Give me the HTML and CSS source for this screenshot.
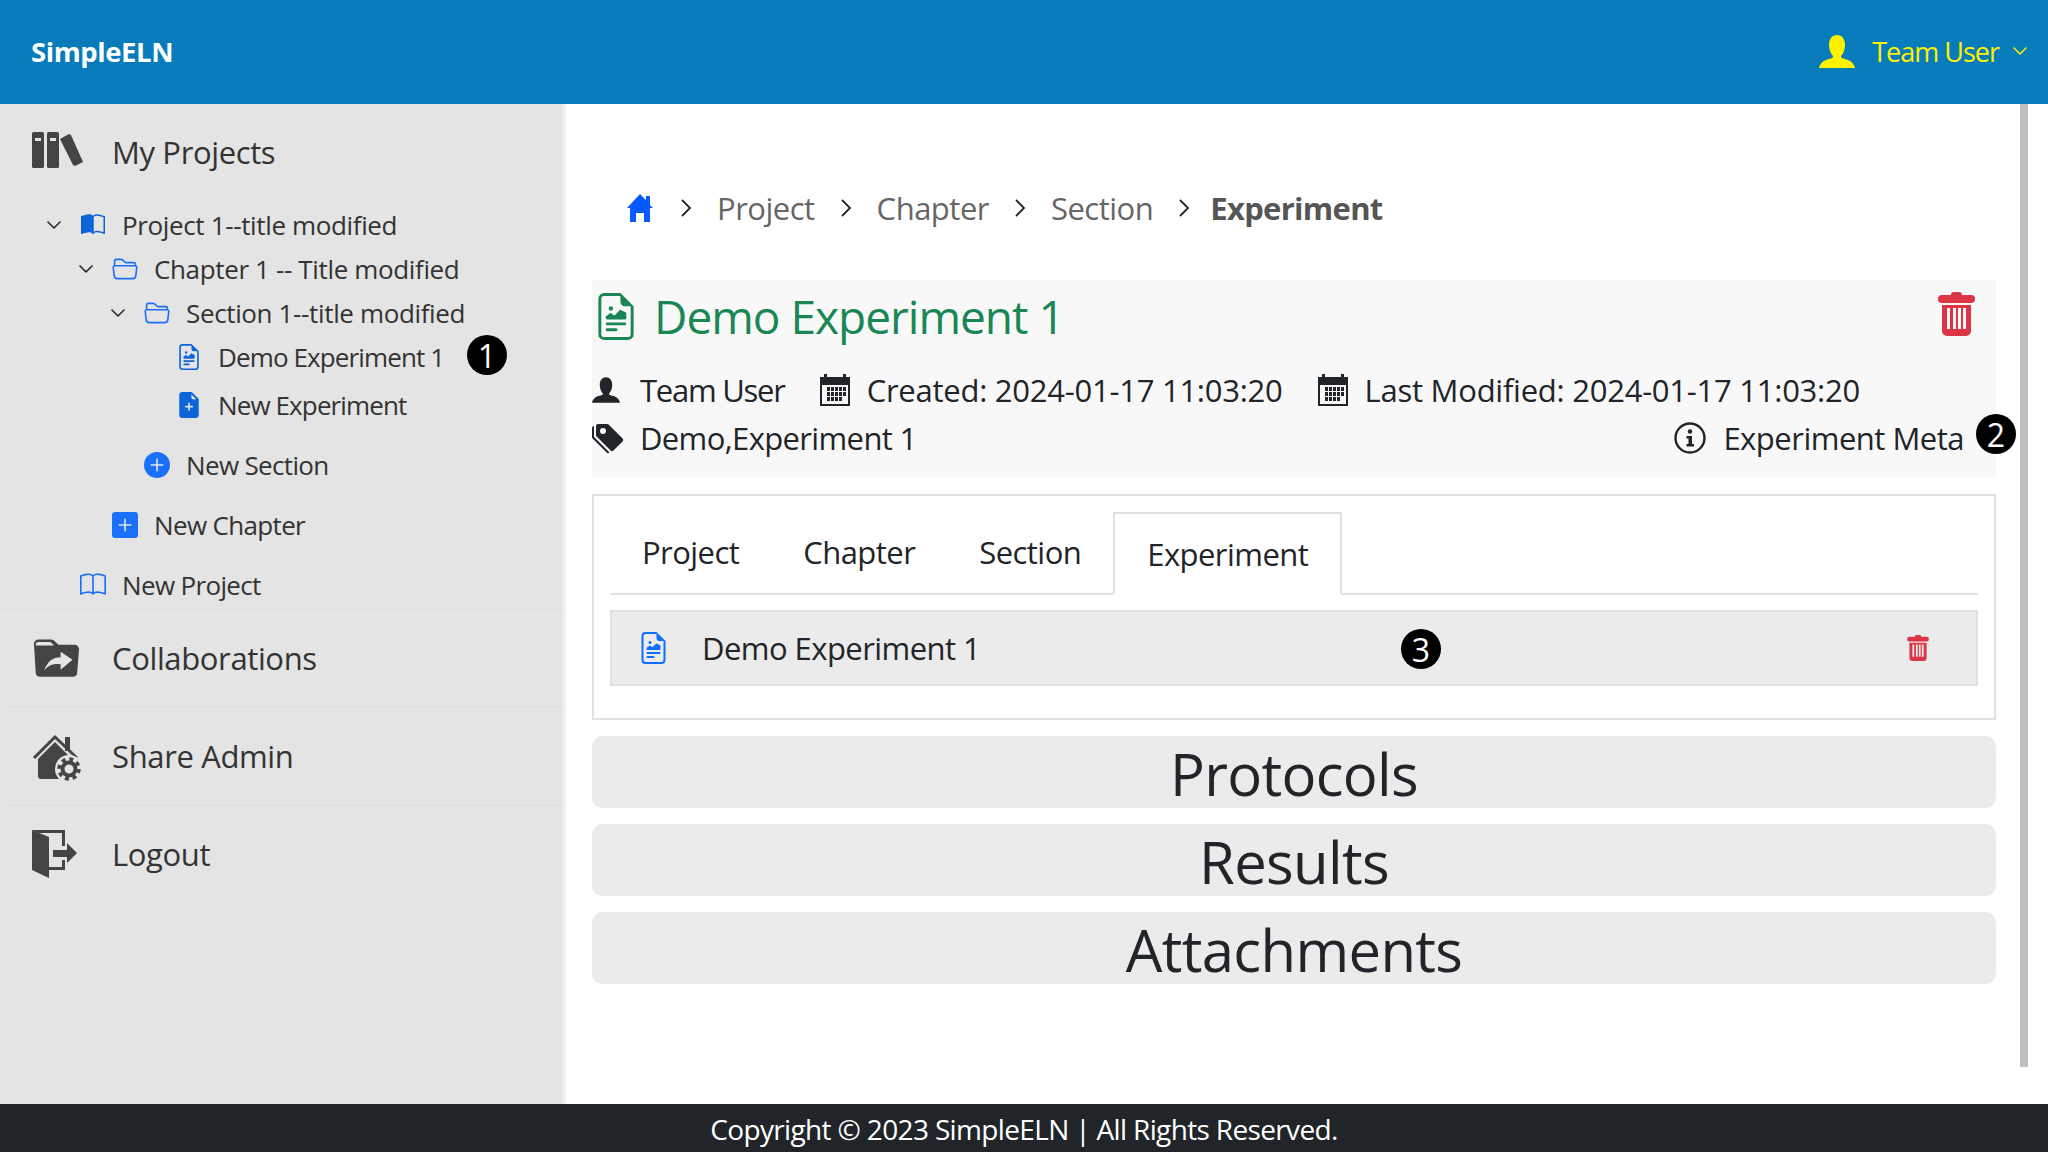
FILE: index.html
```html
<!DOCTYPE html>
<html lang="en">
<head>
<meta charset="utf-8">
<title>SimpleELN</title>
<link rel="stylesheet" href="styles.css">
</head>
<body>
<svg class="defs" aria-hidden="true">
  <symbol id="chev" viewBox="0 0 16 16"><path d="M1.646 4.646a.5.5 0 0 1 .708 0L8 10.293l5.646-5.647a.5.5 0 0 1 .708.708l-6 6a.5.5 0 0 1-.708 0l-6-6a.5.5 0 0 1 0-.708z" stroke="currentColor" stroke-width=".7"/></symbol>
  <symbol id="sep" viewBox="0 0 12 20"><path d="M2 2l8 8-8 8" fill="none" stroke="currentColor" stroke-width="1.8"/></symbol>
  <symbol id="richtext" viewBox="2 0 12 16"><path d="M14 4.5V14a2 2 0 0 1-2 2H4a2 2 0 0 1-2-2V2a2 2 0 0 1 2-2h5.5L14 4.5zm-3 0A1.5 1.5 0 0 1 9.5 3V1H4a1 1 0 0 0-1 1v12a1 1 0 0 0 1 1h8a1 1 0 0 0 1-1V4.5h-2z"/><path d="M4.5 12.5A.5.5 0 0 1 5 12h3a.5.5 0 0 1 0 1H5a.5.5 0 0 1-.5-.5zm0-2A.5.5 0 0 1 5 10h6a.5.5 0 0 1 0 1H5a.5.5 0 0 1-.5-.5zm1.639-3.708 1.33.886 1.854-1.855a.25.25 0 0 1 .289-.047l1.888.974V8.5a.5.5 0 0 1-.5.5H5a.5.5 0 0 1-.5-.5V8s1.54-1.274 1.639-1.208zM6.25 6a.75.75 0 1 0 0-1.5.75.75 0 0 0 0 1.5z"/></symbol>
  <symbol id="trash" viewBox="0 0 37 44"><path fill-rule="evenodd" d="M13 3a3 3 0 0 1 3-3h5a3 3 0 0 1 3 3h9a4 4 0 0 1 0 8H4a4 4 0 0 1 0-8zM4 13h29v26a5 5 0 0 1-5 5H9a5 5 0 0 1-5-5zM9 16v21h3V16zM15 16v21h3V16zM20 16v21h3V16zM25 16v21h3V16z"/></symbol>
  <symbol id="cal" viewBox="0 0 30 32"><path fill-rule="evenodd" d="M0 3h4V0h3v3h16V0h3v3h4v29H0zM2 11v19h26V11z"/><path d="M7 13h3v4H7zM11 13h3v4h-3zM15 13h3v4h-3zM19 13h3v4h-3zM23 13h3v4h-3zM7 18h3v4H7zM11 18h3v4h-3zM15 18h3v4h-3zM19 18h3v4h-3zM23 18h3v4h-3zM7 23h3v4H7zM11 23h3v4h-3zM15 23h3v4h-3zM19 23h3v4h-3z"/></symbol>
  <symbol id="person" viewBox="0 0 36 33"><path d="M18 0c5 0 8 4 8 10 0 5-2 9-4 11 0 2 1 2 4 3 5 1 9 4 10 9H0c1-5 5-8 10-9 3-1 4-1 4-3-2-2-4-6-4-11C10 4 13 0 18 0z"/></symbol>
</svg>

<header class="topbar">
  <a class="brand">SimpleELN</a>
  <div class="user">
    <svg class="user-icon"><use href="#person"/></svg>
    <span class="user-name">Team User</span>
    <svg class="user-caret"><use href="#chev"/></svg>
  </div>
</header>

<div class="body">
  <aside class="sidebar">
    <section class="nav-item nav-projects">
      <div class="nav-head">
        <svg class="nav-icon" viewBox="0 0 53 48"><path fill-rule="evenodd" transform="translate(1 4)" d="M1.500 0h9a1.500 1.500 0 0 1 1.500 1.500v33a1.500 1.500 0 0 1-1.500 1.500h-9A1.500 1.500 0 0 1 0 34.500v-33A1.500 1.500 0 0 1 1.500 0zm1.500 6v3h6V6zM16.500 0h9a1.500 1.500 0 0 1 1.500 1.500v33a1.500 1.500 0 0 1-1.500 1.500h-9a1.500 1.500 0 0 1-1.500-1.500v-33A1.500 1.500 0 0 1 16.500 0zm1.500 6v3h6V6z"/><path transform="translate(1 4)" d="M28 7l9-5 2 1 12 27-8 4-2-1z"/></svg>
        <span>My Projects</span>
      </div>
      <ul class="tree">
        <li>
          <div class="row row-title"><svg class="caret"><use href="#chev"/></svg>
            <svg class="t-icon t-dark" viewBox="0 0 16 16"><path d="M8.500 2.687c.654-.689 1.782-.886 3.112-.752 1.234.124 2.503.523 3.388.893v9.923c-.918-.35-2.107-.692-3.287-.81-1.094-.111-2.278-.039-3.213.492V2.687zM8 1.783C7.015.936 5.587.81 4.287.94c-1.514.153-3.042.672-3.994 1.105A.5.5 0 0 0 0 2.500v11a.5.5 0 0 0 .707.455c.882-.4 2.303-.881 3.680-1.020 1.409-.142 2.590.087 3.223.877a.5.5 0 0 0 .780 0c.633-.79 1.814-1.019 3.222-.877 1.378.139 2.800.620 3.681 1.020A.5.5 0 0 0 16 13.500v-11a.5.5 0 0 0-.293-.455c-.952-.433-2.480-.952-3.994-1.105C10.413.809 8.985.936 8 1.783z"/></svg>
            <span>Project 1--title modified</span></div>
          <ul class="tree sub">
            <li>
              <div class="row row-title"><svg class="caret"><use href="#chev"/></svg>
                <svg class="t-icon" viewBox="0 1 16 15"><path d="M1 3.500A1.500 1.500 0 0 1 2.500 2h2.764c.958 0 1.760.56 2.311 1.184C7.985 3.648 8.480 4 9 4h4.500A1.500 1.500 0 0 1 15 5.500v.64c.57.265.94.876.856 1.546l-.64 5.124A2.500 2.500 0 0 1 12.733 15H3.266a2.500 2.500 0 0 1-2.481-2.190l-.64-5.124A1.500 1.500 0 0 1 1 6.140V3.500zM2 6h12v-.5a.5.5 0 0 0-.5-.5H9c-.964 0-1.710-.629-2.174-1.154C6.374 3.334 5.820 3 5.264 3H2.500a.5.5 0 0 0-.5.500V6zm-.367 1a.5.5 0 0 0-.496.562l.64 5.124A1.500 1.500 0 0 0 3.266 14h9.468a1.500 1.500 0 0 0 1.489-1.314l.64-5.124A.5.5 0 0 0 14.367 7H1.633z"/></svg>
                <span>Chapter 1 -- Title modified</span></div>
              <ul class="tree sub">
                <li>
                  <div class="row row-title"><svg class="caret"><use href="#chev"/></svg>
                    <svg class="t-icon" viewBox="0 1 16 15"><path d="M1 3.500A1.500 1.500 0 0 1 2.500 2h2.764c.958 0 1.760.56 2.311 1.184C7.985 3.648 8.480 4 9 4h4.500A1.500 1.500 0 0 1 15 5.500v.64c.57.265.94.876.856 1.546l-.64 5.124A2.500 2.500 0 0 1 12.733 15H3.266a2.500 2.500 0 0 1-2.481-2.190l-.64-5.124A1.500 1.500 0 0 1 1 6.140V3.500zM2 6h12v-.5a.5.5 0 0 0-.5-.5H9c-.964 0-1.710-.629-2.174-1.154C6.374 3.334 5.820 3 5.264 3H2.500a.5.5 0 0 0-.5.500V6zm-.367 1a.5.5 0 0 0-.496.562l.64 5.124A1.500 1.500 0 0 0 3.266 14h9.468a1.500 1.500 0 0 0 1.489-1.314l.64-5.124A.5.5 0 0 0 14.367 7H1.633z"/></svg>
                    <span>Section 1--title modified</span></div>
                  <ul class="tree sub">
                    <li class="row leaf"><svg class="f-icon t-dark"><use href="#richtext"/></svg><span>Demo Experiment 1</span><span class="badge badge-tree">1</span></li>
                    <li class="row leaf leaf-new"><svg class="f-icon t-dark" viewBox="2 0 12 16"><path d="M9.293 0H4a2 2 0 0 0-2 2v12a2 2 0 0 0 2 2h8a2 2 0 0 0 2-2V4.707A1 1 0 0 0 13.707 4L10 .293A1 1 0 0 0 9.293 0zM9.500 3.500v-2l3 3h-2a1 1 0 0 1-1-1zM8.500 7v1.500H10a.5.5 0 0 1 0 1H8.500V11a.5.5 0 0 1-1 0V9.500H6a.5.5 0 0 1 0-1h1.500V7a.5.5 0 0 1 1 0z"/></svg><span>New Experiment</span></li>
                  </ul>
                </li>
                <li class="row add"><svg class="t-icon" viewBox="0 0 16 16"><path d="M16 8A8 8 0 1 1 0 8a8 8 0 0 1 16 0zM8.500 4.500a.5.5 0 0 0-1 0v3h-3a.5.5 0 0 0 0 1h3v3a.5.5 0 0 0 1 0v-3h3a.5.5 0 0 0 0-1h-3v-3z"/></svg><span>New Section</span></li>
              </ul>
            </li>
            <li class="row add"><svg class="t-icon" viewBox="0 0 16 16"><path d="M2 0a2 2 0 0 0-2 2v12a2 2 0 0 0 2 2h12a2 2 0 0 0 2-2V2a2 2 0 0 0-2-2H2zm6.500 4.500v3h3a.5.5 0 0 1 0 1h-3v3a.5.5 0 0 1-1 0v-3h-3a.5.5 0 0 1 0-1h3v-3a.5.5 0 0 1 1 0z"/></svg><span>New Chapter</span></li>
          </ul>
        </li>
        <li class="row add"><svg class="t-icon" viewBox="0 0 16 16"><path d="M1 2.828c.885-.37 2.154-.769 3.388-.893 1.330-.134 2.458.063 3.112.752v9.746c-.935-.53-2.120-.603-3.213-.493-1.180.12-2.370.461-3.287.811V2.828zm7.500-.141c.654-.689 1.782-.886 3.112-.752 1.234.124 2.503.523 3.388.893v9.923c-.918-.35-2.107-.692-3.287-.81-1.094-.111-2.278-.039-3.213.492V2.687zM8 1.783C7.015.936 5.587.81 4.287.94c-1.514.153-3.042.672-3.994 1.105A.5.5 0 0 0 0 2.500v11a.5.5 0 0 0 .707.455c.882-.4 2.303-.881 3.680-1.020 1.409-.142 2.590.087 3.223.877a.5.5 0 0 0 .780 0c.633-.79 1.814-1.019 3.222-.877 1.378.139 2.800.620 3.681 1.020A.5.5 0 0 0 16 13.500v-11a.5.5 0 0 0-.293-.455c-.952-.433-2.480-.952-3.994-1.105C10.413.809 8.985.936 8 1.783z"/></svg><span>New Project</span></li>
      </ul>
    </section>
    <section class="nav-item">
      <div class="nav-head">
        <svg class="nav-icon" viewBox="0 0 53 48"><path transform="translate(2 4.500) scale(.92 .89)" fill-rule="evenodd" d="M1 6a5 5 0 0 1 5-5h14c3 0 5 4 8 6h17a5 5 0 0 1 5 5l-2 27a5 5 0 0 1-5 4H8a5 5 0 0 1-5-4zM3 7v1h20l-4-4H6a3 3 0 0 0-3 3zM30 15v6c-8 0-14 4-18 15 5-6 10-8 18-7v6l13-11z"/></svg>
        <span>Collaborations</span>
      </div>
    </section>
    <section class="nav-item">
      <div class="nav-head">
        <svg class="nav-icon nav-icon-tall" viewBox="0 0 53 52">
          <path d="M3 27L24 6l22 21" fill="none" stroke="currentColor" stroke-width="3"/>
          <path d="M34 6h5v14h-5z"/>
          <path d="M7 28L24 11l18 18v19H10a3 3 0 0 1-3-3z"/>
          <circle cx="38" cy="38" r="14" fill="#e4e4e4"/>
          <circle cx="38" cy="38" r="6.500" fill="none" stroke="currentColor" stroke-width="4"/>
          <circle cx="38" cy="38" r="10" fill="none" stroke="currentColor" stroke-width="3.500" stroke-dasharray="4 3.850"/>
        </svg>
        <span>Share Admin</span>
      </div>
    </section>
    <section class="nav-item nav-last">
      <div class="nav-head">
        <svg class="nav-icon" viewBox="0 0 53 48"><path d="M1 0l17 7v41L1 40z"/><path d="M1 0h33v16h-3V3H8zM18 37h13v-7h3v10H18z"/><path d="M22 20h14v-7l10 10-10 10v-6H22z"/></svg>
        <span>Logout</span>
      </div>
    </section>
  </aside>

  <main class="main">
    <div class="content">
      <nav class="crumbs">
        <svg class="home" viewBox="0 0 26 28"><path d="M13 0l6 6V2h4v9l3 3h-3v14h-6v-9h-8v9H3V14H0z"/></svg>
        <svg class="sep"><use href="#sep"/></svg><a>Project</a>
        <svg class="sep"><use href="#sep"/></svg><a>Chapter</a>
        <svg class="sep"><use href="#sep"/></svg><a>Section</a>
        <svg class="sep"><use href="#sep"/></svg><b>Experiment</b>
      </nav>

      <section class="summary">
        <div class="title-row">
          <svg class="title-icon"><use href="#richtext"/></svg>
          <h1>Demo Experiment 1</h1>
          <svg class="trash-lg"><use href="#trash"/></svg>
        </div>
        <div class="meta">
          <svg class="m-person"><use href="#person"/></svg><span class="who">Team User</span>
          <svg class="m-cal"><use href="#cal"/></svg><span class="date">Created: 2024-01-17 11:03:20</span>
          <svg class="m-cal"><use href="#cal"/></svg><span class="date">Last Modified: 2024-01-17 11:03:20</span>
        </div>
        <div class="meta meta-2">
          <svg class="m-tag" viewBox="0 0 16 16"><path d="M2 2a1 1 0 0 1 1-1h4.586a1 1 0 0 1 .707.293l7 7a1 1 0 0 1 0 1.414l-4.586 4.586a1 1 0 0 1-1.414 0l-7-7A1 1 0 0 1 2 6.586V2zm3.500 4a1.500 1.500 0 1 0 0-3 1.500 1.500 0 0 0 0 3z"/><path d="M1.293 7.793A1 1 0 0 1 1 7.086V2a1 1 0 0 0-1 1v4.586a1 1 0 0 0 .293.707l7 7a1 1 0 0 0 1.414 0l.043-.043-7.457-7.457z"/></svg>
          <span>Demo,Experiment 1</span>
          <div class="meta-link">
            <svg class="m-info" viewBox="0 0 32 32"><circle cx="16" cy="16" r="14.500" fill="none" stroke="currentColor" stroke-width="2.400"/><circle cx="16" cy="9.500" r="2.200"/><path d="M12.500 14h5.500v8h2v2.500h-7.500V22h2v-5.500h-2z"/></svg>
            <span>Experiment Meta</span>
          </div>
          <span class="badge badge-meta">2</span>
        </div>
      </section>

      <section class="panel">
        <div class="tabs">
          <a class="tab">Project</a>
          <a class="tab">Chapter</a>
          <a class="tab">Section</a>
          <a class="tab active">Experiment</a>
        </div>
        <div class="item">
          <svg class="item-icon"><use href="#richtext"/></svg>
          <span>Demo Experiment 1</span>
          <span class="badge badge-item">3</span>
          <svg class="trash-sm"><use href="#trash"/></svg>
        </div>
      </section>

      <div class="accordion">Protocols</div>
      <div class="accordion">Results</div>
      <div class="accordion">Attachments</div>
    </div>
    <div class="scrollbar"></div>
  </main>
</div>

<footer class="footer">Copyright © 2023 SimpleELN | All Rights Reserved.</footer>
</body>
</html>
```

FILE: styles.css
```css
* { box-sizing: border-box; }
html, body { margin: 0; height: 100%; }
body {
  height: 1152px;
  display: flex;
  flex-direction: column;
  overflow: hidden;
  font-family: "Open Sans", "Noto Sans", sans-serif;
  letter-spacing: -0.64px;
  color: #212529;
  background: #fff;
}
.defs { position: absolute; width: 0; height: 0; }
svg { display: block; flex: none; fill: currentColor; }
ul { list-style: none; margin: 0; padding: 0; }

.topbar {
  height: 104px;
  flex: none;
  background: #087cba;
  display: flex;
  align-items: center;
  justify-content: space-between;
  padding: 0 20px 2px 31px;
}
.brand { color: #fff; font-size: 27.500px; font-weight: 700; letter-spacing: -0.41px; }
.user { display: flex; align-items: center; color: #fff200; font-size: 27px; }
.user-icon { width: 36px; height: 33px; margin: 0 17px 0 0; }
.user-name { margin-right: 13px; letter-spacing: -1px; }
.user-caret { width: 16px; height: 16px; }

.body { flex: 1; min-height: 0; display: flex; }

.sidebar {
  width: 566px;
  flex: none;
  background: #e4e4e4;
  border-right: 4px solid #eeeeee;
}
.nav-item {
  height: 98px;
  margin-left: 2px;
  border-bottom: 2px solid #e0e0e0;
  padding-left: 29px;
  font-size: 31px;
  letter-spacing: -0.37px;
}
.nav-projects { height: 506px; }
.nav-last { border-bottom: 0; }
.nav-head {
  height: 96px;
  display: flex;
  align-items: center;
  gap: 28px;
  color: #333;
}
.nav-icon { width: 53px; height: 48px; color: #444; }
.nav-icon-tall { height: 52px; margin-top: 2px; }
.tree { font-size: 26px; color: #333; letter-spacing: -0.65px; }
.nav-projects > .tree { margin-top: 3px; margin-left: 15px; }
.sub { margin-left: 32px; }
.row {
  height: 44px;
  display: flex;
  align-items: center;
  position: relative;
}
.row-title { letter-spacing: -0.36px; }
.caret { width: 16px; height: 16px; color: #222; margin-right: 18px; }
.t-icon { width: 26px; height: 24px; color: #1a6ffb; margin-right: 16px; }
.t-dark { color: #0d63d8; }
.leaf { padding-left: 37px; letter-spacing: -0.88px; }
.leaf-new { margin-top: 4px; }
.f-icon { width: 20px; height: 26px; margin-right: 19px; }
.add { margin-top: 16px; padding-left: 34px; }
.add .t-icon { height: 26px; }

.badge {
  width: 40px;
  height: 40px;
  border-radius: 50%;
  background: #000;
  color: #fff;
  display: flex;
  align-items: center;
  justify-content: center;
  font-size: 32px;
  font-weight: 500;
  letter-spacing: 0;
}
.badge-tree { position: absolute; left: 325px; top: 0; }
.badge-meta { position: absolute; right: -20px; top: 1px; }
.badge-item { position: absolute; left: 789px; top: 17px; }

.main { flex: 1; min-width: 0; display: flex; }
.content { flex: 1; min-width: 0; padding: 0 24px 0 26px; }
.scrollbar { width: 8px; height: 963px; background: #c0c0c0; flex: none; margin-right: 20px; }

.crumbs {
  height: 176px;
  display: flex;
  align-items: center;
  padding: 50px 0 18px 35px;
  font-size: 31px;
  letter-spacing: -0.5px;
  color: #666;
}
.home { width: 26px; height: 28px; color: #0a58ff; margin-right: 2px; }
.sep { width: 12px; height: 20px; color: #222; margin: 0 25px; }
.crumbs b { font-weight: 700; color: #555; margin-left: -5px; letter-spacing: -0.7px; }

.summary {
  background: #f8f8f8;
  height: 197px;
  position: relative;
}
.title-row { height: 85px; display: flex; align-items: center; padding: 0 0 13px 6px; }
h1 { margin: 0 0 0 20px; font-size: 46px; font-weight: 400; color: #198754; flex: 1; letter-spacing: -1px; }
.title-icon { width: 36px; height: 47px; color: #198754; }
.trash-lg { width: 37px; height: 44px; color: #dc3545; margin: 0 21px 5px 0; }
.meta { height: 48px; display: flex; align-items: center; font-size: 31px; padding-top: 1px; }
.who { letter-spacing: -1.25px; }
.date { letter-spacing: -0.25px; }
.m-person { width: 28px; height: 28px; margin-right: 20px; }
.m-cal { width: 30px; height: 32px; margin: 0 17px 0 35px; }
.meta-2 { position: relative; }
.m-tag { width: 32px; height: 32px; margin-right: 16px; }
.meta-link { margin-left: auto; margin-right: 32px; display: flex; align-items: center; gap: 17px; letter-spacing: -0.5px; }
.m-info { width: 32px; height: 32px; }

.panel {
  margin-top: 17px;
  height: 226px;
  border: 2px solid #dee2e6;
  padding: 16px 16px 0;
}
.tabs {
  height: 83px;
  display: flex;
  align-items: stretch;
  border-bottom: 2px solid #dee2e6;
  font-size: 31px;
  letter-spacing: -0.55px;
}
.tab { display: flex; align-items: center; padding: 0 32px 1px; height: 81px; }
.tab.active {
  height: 83px;
  background: #fff;
  border: 2px solid #dee2e6;
  border-bottom: 2px solid #fff;
  padding-top: 2px;
}
.item {
  margin-top: 15px;
  height: 76px;
  background: #ebebeb;
  border: 2px solid #dee2e6;
  display: flex;
  align-items: center;
  font-size: 31px;
  letter-spacing: -0.55px;
  padding-left: 29px;
  position: relative;
}
.item-icon { width: 25px; height: 32px; color: #0d6efd; margin-right: 36px; }
.trash-sm { width: 22px; height: 26px; color: #dc3545; margin-left: auto; margin-right: 47px; }

.accordion {
  margin-top: 16px;
  height: 72px;
  background: #ebebeb;
  border-radius: 10px;
  font-size: 58px;
  display: flex;
  align-items: center;
  justify-content: center;
  padding-top: 2px;
}

.footer {
  height: 48px;
  flex: none;
  background: #212529;
  color: #fff;
  font-size: 28px;
  letter-spacing: -0.65px;
  padding-top: 1px;
  display: flex;
  align-items: center;
  justify-content: center;
}
```
